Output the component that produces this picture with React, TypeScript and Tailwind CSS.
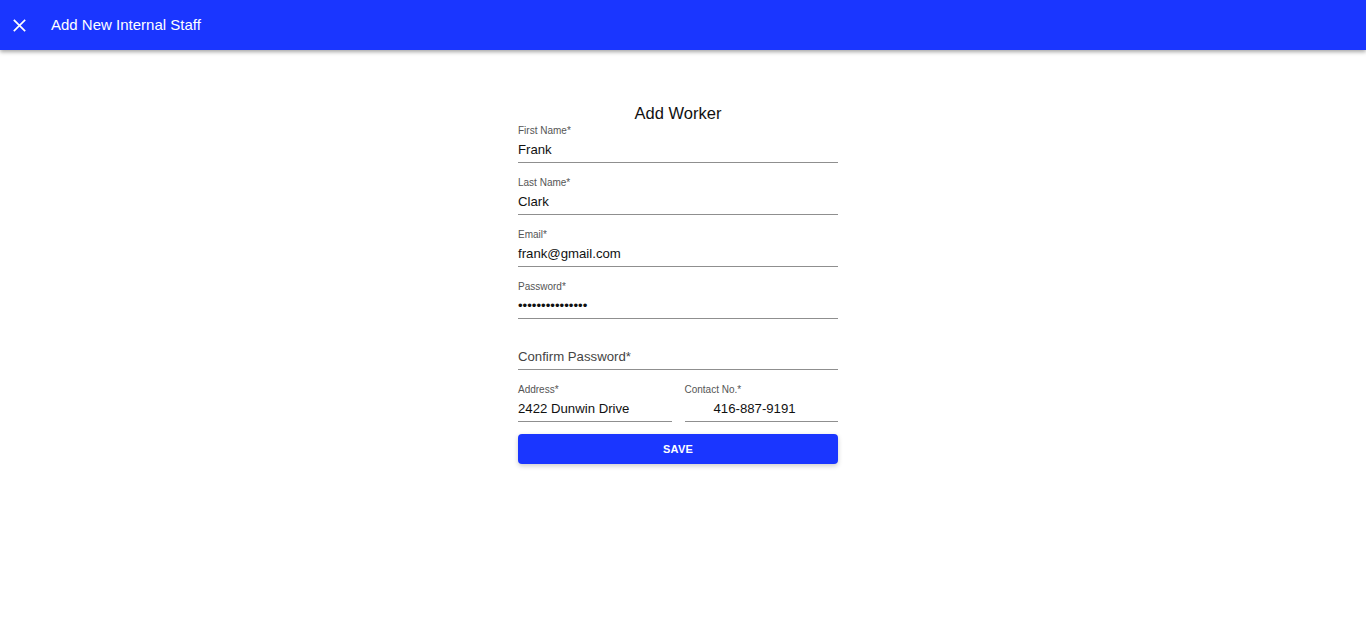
import React from "react";

const font = { fontFamily: '"Liberation Sans", Arial, sans-serif' };

function Field({ label, value, className = "", valueClass = "" }: { label: string; value: string; className?: string; valueClass?: string }) {
  return (
    <div className={`flex flex-col border-b border-[#8f8f8f] pb-[4px] pt-[1px] ${className}`}>
      <div className="text-[10px] leading-[12px] text-[#555]">{label}</div>
      <div className={`mt-[5px] text-[13.2px] leading-[16px] text-[#111] ${valueClass}`}>{value}</div>
    </div>
  );
}

export default function App() {
  return (
    <div className="min-h-[625px] bg-white" style={font}>
      <header className="flex h-[50px] items-center bg-[#1a36ff] shadow-[0_2px_4px_rgba(0,0,0,0.35)]">
        <div className="flex w-[37px] justify-center pl-[1px]">
          <svg width="13" height="13" viewBox="0 0 14 14" fill="none" stroke="white" strokeWidth="1.8" strokeLinecap="square">
            <path d="M1.5 1.5 L12.5 12.5 M12.5 1.5 L1.5 12.5" />
          </svg>
        </div>
        <h1 className="ml-[14px] text-[15px] leading-[20px] text-white">Add New Internal Staff</h1>
      </header>
      <main className="flex justify-center pr-[10px] pt-[53px]">
        <div className="flex w-[320px] flex-col">
          <h2 className="text-center text-[16.5px] leading-[20px] text-[#111]">Add Worker</h2>
          <div className="mt-[1px] flex flex-col gap-[13px]">
            <Field label="First Name*" value="Frank" />
            <Field label="Last Name*" value="Clark" />
            <Field label="Email*" value="frank@gmail.com" />
            <Field label="Password*" value="•••••••••••••••" />
            <div className="flex flex-col border-b border-[#8f8f8f] pb-[4px] pt-[17px]">
              <div className="text-[13.2px] leading-[16px] text-[#444]">Confirm Password*</div>
            </div>
            <div className="flex gap-[13px]">
              <Field label="Address*" value="2422 Dunwin Drive" className="flex-1" />
              <Field label="Contact No.*" value="416-887-9191" className="flex-1" valueClass="pl-[29px]" />
            </div>
          </div>
          <button className="mt-[12px] h-[30px] rounded-[4px] bg-[#1a36ff] text-[11px] font-bold tracking-[0.2px] text-white shadow-[0_2px_5px_rgba(0,0,0,0.2)]">
            SAVE
          </button>
        </div>
      </main>
    </div>
  );
}
